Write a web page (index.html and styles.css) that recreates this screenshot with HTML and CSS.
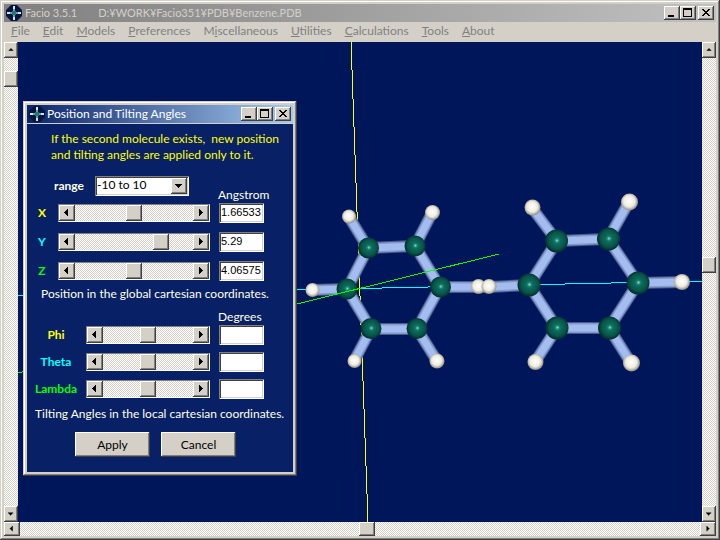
FILE: index.html
```html
<!DOCTYPE html>
<html lang="en">
<head>
  <meta charset="UTF-8" />
  <meta name="viewport" content="width=device-width, initial-scale=1.0" />
  <title>Facio 3.5.1</title>
  <link rel="stylesheet" href="styles.css">
</head>

<body>
  <!-- shared icons -->
  <svg class="sprite" aria-hidden="true">
    <symbol id="logo" viewBox="0 0 16 16">
      <path d="M5 0h6l5 5v6l-5 5H5l-5-5V5z" fill="#04163f" />
      <path d="M8 2v12M1 8h14" stroke="#7d93ad" stroke-width="2" />
      <path d="M8 1v3M8 12v3M1 8h3M12 8h3" stroke="#d8e0e6" stroke-width="2" />
      <rect x="6" y="6" width="4" height="4" fill="#12806c" />
    </symbol>
    <symbol id="minimize" viewBox="0 0 16 14"><path d="M4 9h6v2H4z" /></symbol>
    <symbol id="maximize" viewBox="0 0 16 14"><path d="M3 2h9v9H3zM4 4v6h7V4z" fill-rule="evenodd" /></symbol>
    <symbol id="close" viewBox="0 0 16 14"><path d="M4 3h2v1h1v1h2V4h1V3h2v1h-1v1h-1v1H9v1h1v1h1v1h1v1h-2V9H9V8H7v1H6v1H4V9h1V8h1V7h1V6H6V5H5V4H4z" /></symbol>
    <symbol id="up" viewBox="0 0 8 8"><path d="M3 2h2v1h1v1h1v1H1V4h1V3h1z" /></symbol>
    <symbol id="down" viewBox="0 0 8 8"><path d="M0 2h7v1H6v1H5v1H4v1H3V5H2V4H1V3H0z" /></symbol>
    <symbol id="left" viewBox="0 0 8 8"><path d="M5 0v7H4V6H3V5H2V4H1V3h1V2h1V1h1V0z" /></symbol>
    <symbol id="right" viewBox="0 0 8 8"><path d="M2 0v7h1V6h1V5h1V4h1V3H5V2H4V1H3V0z" /></symbol>
  </svg>

  <div class="window main-window">
    <header class="title-bar inactive">
      <svg class="logo"><use href="#logo" /></svg>
      <h1>Facio 3.5.1</h1>
      <span class="file-path">D:¥WORK¥Facio351¥PDB¥Benzene.PDB</span>
      <div class="window-buttons">
        <button aria-label="Minimize"><svg><use href="#minimize" /></svg></button>
        <button aria-label="Maximize"><svg><use href="#maximize" /></svg></button>
        <button class="close" aria-label="Close"><svg><use href="#close" /></svg></button>
      </div>
    </header>

    <nav class="menu">
      <a href="#"><u>F</u>ile</a>
      <a href="#"><u>E</u>dit</a>
      <a href="#"><u>M</u>odels</a>
      <a href="#"><u>P</u>references</a>
      <a href="#">M<u>i</u>scellaneous</a>
      <a href="#"><u>U</u>tilities</a>
      <a href="#"><u>C</u>alculations</a>
      <a href="#"><u>T</u>ools</a>
      <a href="#"><u>A</u>bout</a>
    </nav>

    <main class="workspace">
      <div class="scroll vertical">
        <button aria-label="Up"><svg><use href="#up" /></svg></button>
        <input type="range" value="3" aria-label="Rotate left" />
        <button aria-label="Down"><svg><use href="#down" /></svg></button>
      </div>

      <div class="view">
        <svg class="scene" viewBox="18 42 684 480" preserveAspectRatio="xMinYMin slice">
          <defs>
            <radialGradient id="carbon" cx="0.52" cy="0.48" r="0.52">
              <stop offset="0" stop-color="#8fe0c8" />
              <stop offset="0.16" stop-color="#1c8573" />
              <stop offset="0.3" stop-color="#0c6b5c" />
              <stop offset="0.7" stop-color="#085548" />
              <stop offset="1" stop-color="#032a2c" />
            </radialGradient>
            <radialGradient id="hydrogen" cx="0.48" cy="0.46" r="0.54">
              <stop offset="0" stop-color="#ffffff" />
              <stop offset="0.6" stop-color="#efece0" />
              <stop offset="1" stop-color="#8f8b80" />
            </radialGradient>
            <path id="bonds" d="M368 248L415 246L440 287L417 329L371 329L347 289Z
              M349 217L368 248M432 213L415 246M440 287H489M437 361L417 329M354 361L371 329M312 290L347 289
              M557 241L608 239L638 283L609 328H557L529 285Z
              M532 208L557 241M629 202L608 239M638 283L682 282M631 363L609 328M535 362L557 328M489 287L529 285" />
          </defs>

          <g class="axes">
            <path d="M351 42L368 522" stroke="#ffff00" />
            <path d="M18 296L702 281" stroke="#00ffff" />
          </g>

          <g fill="none">
            <use href="#bonds" stroke="#4a5a84" stroke-width="12" />
            <use href="#bonds" stroke="#8299cc" stroke-width="10" />
            <use href="#bonds" stroke="#a3bdf0" stroke-width="7" />
          </g>

          <g fill="url(#carbon)">
            <circle cx="368.5" cy="248" r="10.5" />
            <circle cx="415" cy="246" r="10.5" />
            <circle cx="440.5" cy="287" r="10.5" />
            <circle cx="417" cy="328.5" r="10.5" />
            <circle cx="371" cy="328.5" r="10.5" />
            <circle cx="347" cy="289" r="10.5" />
            <circle cx="556.5" cy="241" r="11.5" />
            <circle cx="608.5" cy="239" r="11.5" />
            <circle cx="638" cy="283" r="11.5" />
            <circle cx="609.5" cy="328" r="11.5" />
            <circle cx="557" cy="328" r="11.5" />
            <circle cx="529" cy="285" r="11.5" />
          </g>

          <g fill="url(#hydrogen)">
            <circle cx="349" cy="216.5" r="7" />
            <circle cx="432.5" cy="212.5" r="7.5" />
            <circle cx="478.5" cy="286.5" r="7.5" />
            <circle cx="437" cy="361" r="7.5" />
            <circle cx="354.5" cy="361" r="7" />
            <circle cx="312.5" cy="290" r="7" />
            <circle cx="532.5" cy="207.5" r="8" />
            <circle cx="629.5" cy="202" r="8.5" />
            <circle cx="682" cy="282" r="8" />
            <circle cx="631.5" cy="363" r="8.5" />
            <circle cx="535.5" cy="362" r="8" />
            <circle cx="489" cy="286.5" r="7.5" />
          </g>

          <path class="axes" d="M18 373L499 254" stroke="#00ff00" />
        </svg>

        <section class="window dialog" aria-labelledby="dialog-title">
          <header class="title-bar">
            <svg class="logo"><use href="#logo" /></svg>
            <h2 id="dialog-title">Position and Tilting Angles</h2>
            <div class="window-buttons">
              <button aria-label="Minimize"><svg><use href="#minimize" /></svg></button>
              <button aria-label="Maximize"><svg><use href="#maximize" /></svg></button>
              <button class="close" aria-label="Close"><svg><use href="#close" /></svg></button>
            </div>
          </header>

          <form class="dialog-body">
            <p class="note">If the second molecule exists,&nbsp; new position<br>and tilting angles are applied only to it.</p>

            <div class="range-row">
              <label for="range">range</label>
              <span class="drop-down">
                <select id="range">
                  <option>-10 to 10</option>
                </select>
                <span class="arrow"><svg><use href="#down" /></svg></span>
              </span>
              <span class="unit">Angstrom</span>
            </div>

            <div class="fields position">
              <div class="field">
                <label class="yellow" for="x">X</label>
                <div class="scroll">
                  <button type="button" aria-label="Less"><svg><use href="#left" /></svg></button>
                  <input type="range" value="50" aria-label="X" />
                  <button type="button" aria-label="More"><svg><use href="#right" /></svg></button>
                </div>
                <input class="value" type="text" id="x" value="1.66533" />
              </div>
              <div class="field">
                <label class="cyan" for="y">Y</label>
                <div class="scroll">
                  <button type="button" aria-label="Less"><svg><use href="#left" /></svg></button>
                  <input type="range" value="76" aria-label="Y" />
                  <button type="button" aria-label="More"><svg><use href="#right" /></svg></button>
                </div>
                <input class="value" type="text" id="y" value="5.29" />
              </div>
              <div class="field">
                <label class="green" for="z">Z</label>
                <div class="scroll">
                  <button type="button" aria-label="Less"><svg><use href="#left" /></svg></button>
                  <input type="range" value="50" aria-label="Z" />
                  <button type="button" aria-label="More"><svg><use href="#right" /></svg></button>
                </div>
                <input class="value" type="text" id="z" value="4.06575" />
              </div>
            </div>
            <p class="caption">Position in the global cartesian coordinates.</p>

            <div class="unit-row"><span class="unit">Degrees</span></div>
            <div class="fields angles">
              <div class="field">
                <label class="yellow" for="phi">Phi</label>
                <div class="scroll">
                  <button type="button" aria-label="Less"><svg><use href="#left" /></svg></button>
                  <input type="range" value="50" aria-label="Phi" />
                  <button type="button" aria-label="More"><svg><use href="#right" /></svg></button>
                </div>
                <input class="value" type="text" id="phi" />
              </div>
              <div class="field">
                <label class="cyan" for="theta">Theta</label>
                <div class="scroll">
                  <button type="button" aria-label="Less"><svg><use href="#left" /></svg></button>
                  <input type="range" value="50" aria-label="Theta" />
                  <button type="button" aria-label="More"><svg><use href="#right" /></svg></button>
                </div>
                <input class="value" type="text" id="theta" />
              </div>
              <div class="field">
                <label class="green" for="lambda">Lambda</label>
                <div class="scroll">
                  <button type="button" aria-label="Less"><svg><use href="#left" /></svg></button>
                  <input type="range" value="50" aria-label="Lambda" />
                  <button type="button" aria-label="More"><svg><use href="#right" /></svg></button>
                </div>
                <input class="value" type="text" id="lambda" />
              </div>
            </div>
            <p class="caption angles-caption">Tilting Angles in the local cartesian coordinates.</p>

            <div class="actions">
              <button type="button">Apply</button>
              <button type="button">Cancel</button>
            </div>
          </form>
        </section>
      </div>

      <div class="scroll vertical">
        <button aria-label="Up"><svg><use href="#up" /></svg></button>
        <input type="range" value="46" aria-label="Rotate right" />
        <button aria-label="Down"><svg><use href="#down" /></svg></button>
      </div>
    </main>

    <div class="scroll horizontal">
      <button aria-label="Left"><svg><use href="#left" /></svg></button>
      <input type="range" value="51" aria-label="Turn" />
      <button aria-label="Right"><svg><use href="#right" /></svg></button>
    </div>
  </div>
</body>
</html>
```

FILE: styles.css
```css
* {
  box-sizing: border-box;
  margin: 0;
  padding: 0;
}

body,
button,
input,
select {
  font: 12px/16px Lato, "Noto Sans CJK JP", sans-serif;
}

body {
  background-color: #d4d0c8;
}

.sprite {
  position: absolute;
  width: 0;
  height: 0;
}

/* Windows */
.window {
  display: flex;
  flex-direction: column;
  padding: 4px;
  background-color: #d4d0c8;
  box-shadow: inset -1px -1px #404040, inset 1px 1px #d4d0c8,
    inset -2px -2px #808080, inset 2px 2px #fff;
}

.main-window {
  height: 100vh;
}

.title-bar {
  display: flex;
  align-items: center;
  height: 18px;
  padding: 0 2px;
  background: linear-gradient(to right, #0a246a, #a6caf0);
  color: #fff;
  font-size: 12px;
  flex-shrink: 0;
}

.title-bar.inactive {
  background: linear-gradient(to right, #808080, #c0c0c0);
  color: #d4d0c8;
  font-size: 11px;
}

.title-bar h1,
.title-bar h2 {
  font-size: inherit;
  font-weight: normal;
}

.logo {
  width: 16px;
  height: 16px;
  margin-right: 3px;
}

.dialog .logo {
  margin-right: 2px;
}

.file-path {
  margin-left: 21px;
}

.window-buttons {
  display: flex;
  margin-left: auto;
}

.window-buttons .close {
  margin-left: 2px;
}

.window-buttons button,
.window-buttons svg {
  display: block;
  width: 16px;
  height: 14px;
}

button,
.arrow {
  border: none;
  background-color: #d4d0c8;
  color: #000;
  box-shadow: inset -1px -1px #404040, inset 1px 1px #fff,
    inset -2px -2px #808080;
}

.menu {
  display: flex;
  gap: 13px;
  height: 20px;
  padding: 1px 7px;
  flex-shrink: 0;
}

.menu a {
  color: #808080;
  text-decoration: none;
}

.workspace {
  display: flex;
  flex: 1;
  min-height: 0;
}

.view {
  position: relative;
  flex: 1;
  background-color: #00165a;
  overflow: hidden;
}

.scene {
  display: block;
  width: 100%;
  height: 100%;
}

.axes {
  fill: none;
  shape-rendering: crispEdges;
}

/* Scroll bars */
.scroll {
  display: flex;
  height: 18px;
  flex: 1;
  min-width: 0;
  border: 1px solid;
  border-color: #808080 #fff #fff #808080;
}

.scroll.vertical,
.scroll.horizontal {
  flex: none;
  height: 14px;
  border: none;
}

.scroll.vertical {
  flex-direction: column;
  width: 14px;
  height: auto;
}

.scroll button {
  display: flex;
  align-items: center;
  justify-content: center;
  width: 16px;
  flex-shrink: 0;
}

.scroll.vertical button {
  width: 14px;
  height: 16px;
}

.scroll svg,
.arrow svg {
  width: 8px;
  height: 8px;
}

.scroll.vertical svg,
.scroll.horizontal svg {
  width: 6px;
  height: 6px;
}

.scroll input {
  appearance: none;
  display: block;
  flex: 1;
  min-width: 0;
  min-height: 0;
  background: repeating-conic-gradient(#fff 0 25%, #d4d0c8 0 50%) 0 0 / 2px 2px;
}

.scroll.vertical input {
  writing-mode: vertical-lr;
  width: 14px;
}

.scroll input::-webkit-slider-thumb {
  appearance: none;
  width: 16px;
  height: 16px;
  background-color: #d4d0c8;
  box-shadow: inset -1px -1px #404040, inset 1px 1px #fff,
    inset -2px -2px #808080;
}

.scroll.horizontal input::-webkit-slider-thumb {
  height: 14px;
}

.scroll.vertical input::-webkit-slider-thumb {
  width: 14px;
}

/* Dialog */
.dialog {
  position: absolute;
  top: 59px;
  left: 5px;
  width: 274px;
}

.dialog-body {
  margin-top: 1px;
  padding: 7px 0 15px;
  background-color: #082166;
  color: #ffffe8;
}

.note {
  padding-left: 24px;
  color: #ffff00;
}

.range-row {
  display: flex;
  height: 27px;
  margin-top: 13px;
  padding-left: 27px;
}

.range-row label {
  width: 41px;
  line-height: 20px;
}

label {
  font-weight: bold;
}

.drop-down {
  position: relative;
  width: 94px;
  height: 20px;
}

.drop-down select,
.value {
  appearance: none;
  width: 100%;
  height: 20px;
  padding: 0 2px 2px;
  border: none;
  background-color: #fff;
  color: #000;
  box-shadow: inset 1px 1px #808080, inset -1px -1px #fff,
    inset 2px 2px #404040, inset -2px -2px #d4d0c8;
}

.arrow {
  position: absolute;
  top: 2px;
  right: 2px;
  display: flex;
  align-items: center;
  justify-content: center;
  width: 16px;
  height: 16px;
}

.unit {
  align-self: flex-end;
  width: 75px;
  margin-left: auto;
}

.unit-row {
  display: flex;
  margin-top: 7px;
}

.fields {
  display: flex;
  flex-direction: column;
  gap: 9px;
  padding: 0 29px 0 8px;
}

.fields.angles {
  gap: 7px;
}

.field {
  display: flex;
  align-items: center;
  gap: 9px;
}

.field label {
  width: 14px;
  text-align: center;
}

.angles label {
  width: 42px;
}

.field .value {
  width: 45px;
  font-family: "Liberation Sans", sans-serif;
  font-size: 11px;
}

.yellow {
  color: #ffff00;
}

.cyan {
  color: #00ffff;
}

.green {
  color: #00ff00;
}

.caption {
  margin-top: 5px;
  padding-left: 14px;
}

.angles-caption {
  margin-top: 7px;
  padding-left: 8px;
}

.actions {
  display: flex;
  gap: 11px;
  margin-top: 10px;
  padding-left: 48px;
}

.actions button {
  width: 75px;
  height: 25px;
}
```
